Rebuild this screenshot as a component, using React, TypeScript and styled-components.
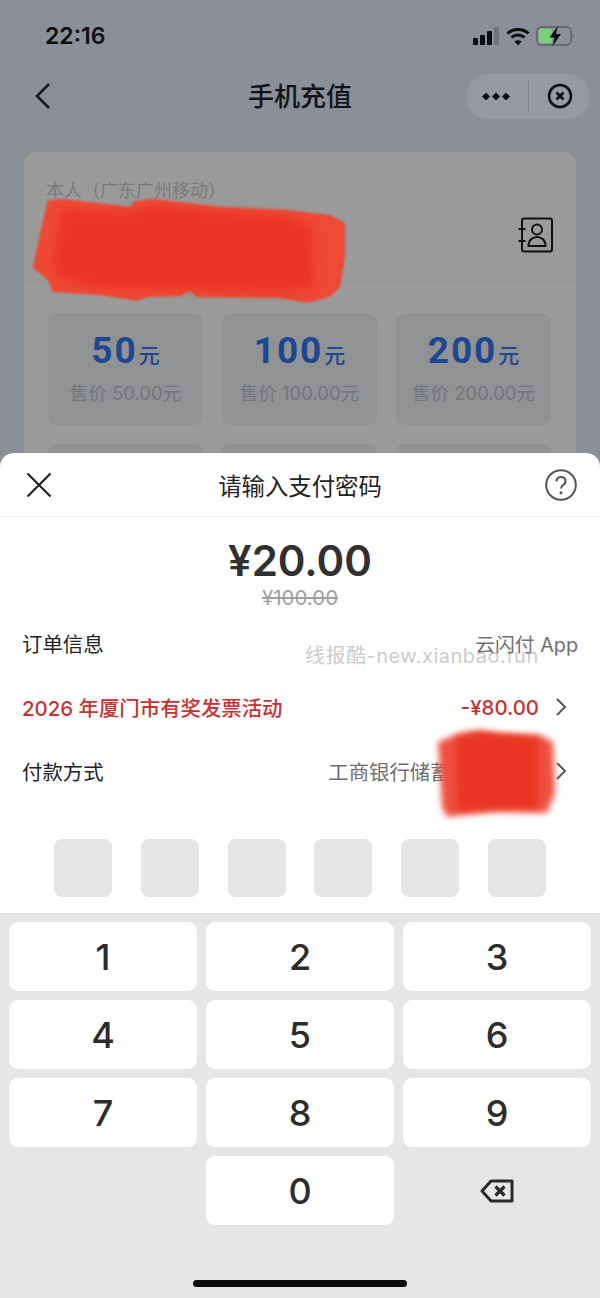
import React from 'react';
import styled, { createGlobalStyle } from 'styled-components';

const GlobalStyle = createGlobalStyle`
  html, body {
    margin: 0;
    padding: 0;
    background: #8b8f98;
    font-family: Inter, "Noto Sans CJK SC", sans-serif;
  }
  * { box-sizing: border-box; }
`;

const Screen = styled.div`
  position: relative;
  width: 600px;
  height: 1298px;
  overflow: hidden;
  background: #8b8f98;
`;

const StatusBar = styled.div`
  height: 74px;
  padding: 21px 26px 0 45px;
  display: flex;
  justify-content: space-between;
  align-items: flex-start;
`;

const Time = styled.span`
  font-size: 23px;
  line-height: 30px;
  font-weight: 600;
  color: #0c0d10;
`;

const StatusIcons = styled.div`
  display: flex;
  align-items: center;
  gap: 6px;
  height: 30px;
`;

const NavBar = styled.div`
  height: 44px;
  padding: 0 10px 0 34px;
  display: flex;
  align-items: center;
  justify-content: space-between;
  position: relative;
`;

const NavTitle = styled.div`
  position: absolute;
  left: 0;
  right: 0;
  top: -1px;
  text-align: center;
  font-family: "Noto Sans CJK SC", sans-serif;
  font-size: 26px;
  font-weight: 500;
  color: #111318;
  line-height: 44px;
`;

const Capsule = styled.div`
  width: 124px;
  height: 45px;
  border-radius: 23px;
  background: #969a9f;
  display: flex;
  align-items: center;
  padding: 0 17px 0 16px;
  justify-content: space-between;
`;

const CapsuleDivider = styled.div`
  width: 1px;
  height: 30px;
  background: #84878d;
`;

const Card = styled.div`
  position: relative;
  margin: 34px 24px 0;
  height: 600px;
  border-radius: 12px;
  background: #9a9a9a;
`;

const PhoneBlock = styled.div`
  height: 130px;
  padding: 24px 22px 0;
  border-bottom: 1px solid #929292;
  position: relative;
`;

const PhoneLabel = styled.div`
  font-family: "Noto Sans CJK SC", sans-serif;
  font-size: 18px;
  line-height: 26px;
  color: #7a7a7a;
`;

const ContactButton = styled.div`
  position: absolute;
  right: 22px;
  top: 65px;
`;

const Tiles = styled.div`
  display: grid;
  grid-template-columns: repeat(3, 155px);
  column-gap: 19px;
  row-gap: 19px;
  padding: 32px 24px 0;
`;

const Tile = styled.div`
  height: 111px;
  border-radius: 8px;
  background: #909294;
  display: flex;
  flex-direction: column;
  align-items: center;
  padding-top: 13px;
`;

const TileAmount = styled.div`
  font-family: Roboto, sans-serif;
  font-size: 37px;
  line-height: 48px;
  font-weight: 700;
  letter-spacing: 2px;
  color: #1f4791;
  display: flex;
  align-items: baseline;
`;

const TileUnit = styled.span`
  font-family: "Noto Sans CJK SC", sans-serif;
  font-size: 21px;
  font-weight: 500;
  letter-spacing: 0;
  margin-left: 1px;
`;

const TilePrice = styled.div`
  font-size: 18.5px;
  line-height: 26px;
  margin-top: 2px;
  color: #75777b;
`;

const Sheet = styled.div`
  position: absolute;
  left: 0;
  right: 0;
  bottom: 0;
  height: 845px;
  border-radius: 14px 14px 0 0;
  background: #fff;
  display: flex;
  flex-direction: column;
`;

const SheetHeader = styled.div`
  height: 64px;
  flex: none;
  padding: 0 23px 0 26px;
  display: flex;
  align-items: center;
  justify-content: space-between;
  border-bottom: 1px solid #f1f1f1;
  position: relative;
`;

const SheetTitle = styled.div`
  position: absolute;
  left: 0;
  right: 0;
  text-align: center;
  font-family: "Noto Sans CJK SC", sans-serif;
  font-size: 23.4px;
  line-height: 62px;
  color: #222;
`;

const AmountBlock = styled.div`
  height: 94px;
  flex: none;
  display: flex;
  flex-direction: column;
  align-items: center;
  padding-top: 17px;
`;

const Amount = styled.div`
  font-size: 42px;
  line-height: 54px;
  font-weight: 600;
  color: #303030;
`;

const OldAmount = styled.div`
  font-size: 20.5px;
  line-height: 24px;
  margin-top: -2px;
  color: #a0a0a0;
  text-decoration: line-through;
`;

const Rows = styled.div`
  display: flex;
  flex-direction: column;
`;

const Row = styled.div<{ $promo?: boolean }>`
  height: 64px;
  padding: 0 22px;
  display: flex;
  align-items: center;
  justify-content: space-between;
  font-size: 20.4px;
  font-weight: ${(p) => (p.$promo ? 500 : 400)};
  color: ${(p) => (p.$promo ? '#c83232' : '#222')};
`;

const RowValue = styled.div<{ $promo?: boolean }>`
  display: flex;
  align-items: center;
  gap: 16px;
  color: ${(p) => (p.$promo ? '#c83232' : '#6f6f6f')};
`;

const AppName = styled.span`
  font-size: 19.8px;
`;

// leaves room for the part of the card name that sits under the red scribble
const CardName = styled.span`
  padding-right: 68px;
`;

const ChevronIcon = styled.svg`
  margin-right: 11px;
`;

const PinRow = styled.div`
  display: flex;
  justify-content: space-between;
  padding: 36px 54px 0;
  flex: none;
`;

const PinBox = styled.div`
  width: 58px;
  height: 58px;
  border-radius: 8px;
  background: #e6e6e6;
`;

const Keyboard = styled.div`
  margin-top: 16px;
  flex: 1;
  background: #e6e6e6;
  padding: 9px 9px 0;
  display: grid;
  grid-template-columns: repeat(3, 188px);
  grid-auto-rows: 69px;
  column-gap: 9px;
  row-gap: 9px;
`;

const Key = styled.div<{ $plain?: boolean }>`
  border-radius: 9px;
  background: ${(p) => (p.$plain ? 'transparent' : '#fff')};
  display: flex;
  align-items: center;
  justify-content: center;
  font-size: 36px;
  font-weight: 450;
  color: #2c2c2c;
`;

const HomeIndicator = styled.div`
  position: absolute;
  left: 193px;
  bottom: 11px;
  width: 214px;
  height: 7px;
  border-radius: 4px;
  background: #0a0a0a;
`;

const Watermark = styled.div`
  position: absolute;
  left: 305px;
  top: 642px;
  font-size: 20px;
  line-height: 28px;
  letter-spacing: 0.5px;
  color: rgba(120, 120, 120, 0.4);
  white-space: nowrap;
`;

const ScribbleLayer = styled.svg`
  position: absolute;
  left: 0;
  top: 0;
  pointer-events: none;
`;

const Chevron = () => (
  <ChevronIcon width="12" height="20" viewBox="0 0 12 20" fill="none" stroke="#555" strokeWidth="2">
    <path d="M2 2l8 8-8 8" />
  </ChevronIcon>
);

const tiles = [
  ['50', '售价 50.00元'],
  ['100', '售价 100.00元'],
  ['200', '售价 200.00元'],
];

const keys = ['1', '2', '3', '4', '5', '6', '7', '8', '9'];

export default function App() {
  return (
    <>
      <GlobalStyle />
      <Screen>
        <StatusBar>
          <Time>22:16</Time>
          <StatusIcons>
            <svg width="27" height="18" viewBox="0 0 27 18">
              <rect x="0" y="11" width="5" height="7" rx="1" fill="#0c0d10" />
              <rect x="7" y="8" width="5" height="10" rx="1" fill="#0c0d10" />
              <rect x="14" y="4" width="5" height="14" rx="1" fill="#0c0d10" />
              <rect x="21" y="0" width="5" height="18" rx="1" fill="#70737a" />
            </svg>
            <svg width="24" height="19" viewBox="0 0 24 19" fill="none" stroke="#0c0d10" strokeWidth="3">
              <path d="M1.500 6.500C7 1.200 17 1.200 22.500 6.500" />
              <path d="M5.500 10.500C9 7.300 15 7.300 18.500 10.500" />
              <path d="M12 18.500l-3.600-4.200c2-1.500 5.200-1.500 7.200 0z" fill="#0c0d10" stroke="none" />
            </svg>
            <svg width="38" height="20" viewBox="0 0 38 20">
              <rect x="1" y="1" width="34" height="18" rx="4.500" fill="none" stroke="#5d6066" strokeWidth="1.400" />
              <rect x="2.800" y="2.800" width="13" height="14.400" rx="2.500" fill="#79d277" />
              <path d="M36.500 7.500c1.300.5 1.300 4.500 0 5z" fill="#5d6066" />
              <path d="M22 0L13.500 11.500h5L16.500 20l8.500-12h-5z" fill="#0c0d10" />
            </svg>
          </StatusIcons>
        </StatusBar>

        <NavBar>
          <NavTitle>手机充值</NavTitle>
          <svg width="18" height="28" viewBox="0 0 18 28" fill="none" stroke="#16181c" strokeWidth="2.600">
            <path d="M15 2L3 14l12 12" />
          </svg>
          <Capsule>
            <svg width="28" height="9" viewBox="0 0 28 9" fill="#111" stroke="#111" strokeWidth="1" strokeLinejoin="round">
              <path d="M4 1l3.500 3.500L4 8 .5 4.500z" />
              <path d="M14 1l3.500 3.500L14 8l-3.500-3.500z" />
              <path d="M24 1l3.500 3.500L24 8l-3.500-3.500z" />
            </svg>
            <CapsuleDivider />
            <svg width="26" height="26" viewBox="0 0 26 26" fill="none" stroke="#111">
              <circle cx="13" cy="13" r="11" strokeWidth="2.600" />
              <path d="M9.500 9.500l7 7M16.500 9.500l-7 7" strokeWidth="2.800" />
            </svg>
          </Capsule>
        </NavBar>

        <Card>
          <PhoneBlock>
            <PhoneLabel>本人（广东广州移动）</PhoneLabel>
            <ContactButton>
              <svg width="36" height="36" viewBox="0 0 36 36" fill="none" stroke="#111" strokeWidth="2">
                <rect x="4" y="1.500" width="30" height="33" rx="2" />
                <path d="M0.500 12h7M0.500 24h7" />
                <circle cx="19" cy="12.500" r="5" />
                <path d="M10.500 29c0-6 4-9 8.500-9s8.500 3 8.500 9z" />
              </svg>
            </ContactButton>
          </PhoneBlock>
          <Tiles>
            {tiles.map(([amount, price]) => (
              <Tile key={amount}>
                <TileAmount>
                  {amount}
                  <TileUnit>元</TileUnit>
                </TileAmount>
                <TilePrice>{price}</TilePrice>
              </Tile>
            ))}
            <Tile />
            <Tile />
            <Tile />
          </Tiles>
        </Card>

        <Sheet>
          <SheetHeader>
            <SheetTitle>请输入支付密码</SheetTitle>
            <svg width="26" height="26" viewBox="0 0 26 26" fill="none" stroke="#1a1a1a" strokeWidth="2">
              <path d="M1.500 1.500l23 23M24.500 1.500l-23 23" />
            </svg>
            <svg width="32" height="32" viewBox="0 0 32 32" fill="none" stroke="#555" strokeWidth="2">
              <circle cx="16" cy="16" r="14.800" />
              <path d="M11.500 12.500c0-6 9-6 9 0 0 3.500-4.500 3.500-4.500 7" strokeWidth="2.200" />
              <circle cx="16" cy="23.800" r="1.500" fill="#555" stroke="none" />
            </svg>
          </SheetHeader>

          <AmountBlock>
            <Amount>¥20.00</Amount>
            <OldAmount>¥100.00</OldAmount>
          </AmountBlock>

          <Rows>
            <Row>
              <span>订单信息</span>
              <RowValue>
                <AppName>云闪付 App</AppName>
              </RowValue>
            </Row>
            <Row $promo>
              <span>2026 年厦门市有奖发票活动</span>
              <RowValue $promo>
                -¥80.00
                <Chevron />
              </RowValue>
            </Row>
            <Row>
              <span>付款方式</span>
              <RowValue>
                <CardName>工商银行储蓄卡</CardName>
                <Chevron />
              </RowValue>
            </Row>
          </Rows>

          <PinRow>
            {[0, 1, 2, 3, 4, 5].map((i) => (
              <PinBox key={i} />
            ))}
          </PinRow>

          <Keyboard>
            {keys.map((k) => (
              <Key key={k}>{k}</Key>
            ))}
            <Key $plain />
            <Key>0</Key>
            <Key $plain>
              <svg width="34" height="24" viewBox="0 0 34 24" fill="none" stroke="#2a2a2a" strokeWidth="3" strokeLinejoin="round">
                <path d="M11 2h21v20H11L2 12z" />
                <path d="M15.500 7.500l9 9M24.500 7.500l-9 9" strokeWidth="3.200" />
              </svg>
            </Key>
          </Keyboard>
        </Sheet>

        <HomeIndicator />
        <Watermark>线报酷-new.xianbao.fun</Watermark>

        <ScribbleLayer width="600" height="1298" viewBox="0 0 600 1298">
          <defs>
            <filter id="soft" x="-10%" y="-10%" width="120%" height="120%">
              <feGaussianBlur stdDeviation="1.200" />
            </filter>
            <filter id="softer" x="-10%" y="-10%" width="120%" height="120%">
              <feGaussianBlur stdDeviation="3" />
            </filter>
            <filter id="core" x="-10%" y="-10%" width="120%" height="120%">
              <feGaussianBlur stdDeviation="5" />
            </filter>
          </defs>
          <path
            d="M48 200L63 199L130 207L135 201L153 199L220 207L287 210L330 215L345 223L345 257L340 287L330 297L307 303L280 298L197 297L190 290L180 296L147 297L138 301L100 295L53 292L48 280L33 268L40 233z"
            fill="#ee4a36"
            filter="url(#soft)"
          />
          <path
            d="M62 209L130 213L153 205L220 212L287 216L312 228L314 288L280 292L197 290L147 290L100 288L62 280L52 265z"
            fill="#eb3620"
            filter="url(#core)"
          />
          <path
            d="M438 742L460 733L480 730L497 733L540 735L553 742L555 793L547 813L497 812L463 815L447 817L442 807L440 770z"
            fill="#ee5040"
            filter="url(#softer)"
          />
          <path d="M456 738L480 733L538 738L538 808L497 808L458 811z" fill="#e93623" filter="url(#softer)" />
        </ScribbleLayer>
      </Screen>
    </>
  );
}
